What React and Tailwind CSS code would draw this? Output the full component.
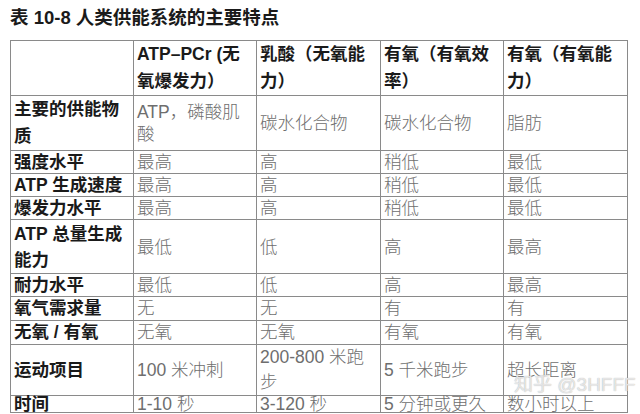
import React from "react";

const headers = [
  "",
  ["ATP–PCr (无", "氧爆发力）"],
  ["乳酸（无氧能", "力）"],
  ["有氧（有氧效", "率）"],
  ["有氧（有氧能", "力）"],
];

// lh: height/leading class for one text line in that row
const rows = [
  { h: "h-[55px]", lh: "h-[22px] leading-[22px]", labelLh: "h-[27px] leading-[27px]", label: ["主要的供能物", "质"], cells: [["ATP，磷酸肌", "酸"], "碳水化合物", "碳水化合物", "脂肪"] },
  { h: "h-[23px]", lh: "h-[22px] leading-[22px]", label: "强度水平", cells: ["最高", "高", "稍低", "最低"] },
  { h: "h-[23px]", lh: "h-[22px] leading-[22px]", label: "ATP 生成速度", cells: ["最高", "高", "稍低", "最低"] },
  { h: "h-[23px]", lh: "h-[22px] leading-[22px]", label: "爆发力水平", cells: ["最高", "高", "稍低", "最低"] },
  { h: "h-[54px]", lh: "h-[22px] leading-[22px]", labelLh: "h-[26px] leading-[26px]", label: ["ATP 总量生成", "能力"], cells: ["最低", "低", "高", "最高"] },
  { h: "h-[23px]", lh: "h-[22px] leading-[22px]", label: "耐力水平", cells: ["最低", "低", "高", "最高"] },
  { h: "h-[24px]", lh: "h-[23px] leading-[23px]", label: "氧气需求量", cells: ["无", "无", "有", "有"] },
  { h: "h-[24px]", lh: "h-[23px] leading-[23px]", label: "无氧 / 有氧", cells: ["无氧", "无氧", "有氧", "有氧"] },
  { h: "h-[51px]", lh: "h-[25px] leading-[25px]", label: "运动项目", cells: ["100 米冲刺", ["200-800 米跑", "步"], "5 千米跑步", "超长距离"] },
  { h: "h-[17px]", lh: "h-[16px] leading-[16px]", label: "时间", cells: ["1-10 秒", "3-120 秒", "5 分钟或更久", "数小时以上"] },
];

const Lines = ({ value, lh }) => {
  const list = Array.isArray(value) ? value : [value];
  return list.map((line, i) => (
    <div key={i} className={"whitespace-nowrap overflow-visible " + lh}>
      {line}
    </div>
  ));
};

export default function App() {
  return (
    <div
      className="relative w-[640px] h-[414px] overflow-hidden bg-white text-[#1a1a1a]"
      style={{ fontFamily: '"Liberation Sans", "Noto Sans CJK SC", sans-serif' }}
    >
      <div className="h-[40px] pl-[10px] pt-[6px] text-[18.5px] font-bold leading-[24px]">
        表 10-8 人类供能系统的主要特点
      </div>

      <table className="ml-[10px] w-[617px] table-fixed border-collapse">
        <colgroup>
          <col className="w-[123px]" />
          <col className="w-[123px]" />
          <col className="w-[124px]" />
          <col className="w-[123px]" />
          <col className="w-[124px]" />
        </colgroup>
        <thead>
          <tr className="h-[53px]">
            {headers.map((hd, i) => (
              <th
                key={i}
                className="border border-[#8a8a8a] px-[3px] py-0 text-left align-middle text-[17.5px] font-bold"
              >
                {hd && <Lines value={hd} lh="h-[27px] leading-[27px]" />}
              </th>
            ))}
          </tr>
        </thead>
        <tbody>
          {rows.map((r, ri) => (
            <tr key={ri} className={r.h}>
              <td className="border border-[#8a8a8a] px-[3px] py-0 align-middle text-[17.5px] font-bold">
                <Lines value={r.label} lh={r.labelLh || r.lh} />
              </td>
              {r.cells.map((c, ci) => (
                <td
                  key={ci}
                  className="border border-[#8a8a8a] px-[3px] py-0 align-middle text-[17.5px] font-light text-[#6e6e6e]"
                >
                  <Lines value={c} lh={r.lh} />
                </td>
              ))}
            </tr>
          ))}
        </tbody>
      </table>

      <div className="absolute left-[514px] top-[373px] text-[19px] leading-[24px] text-white/70 [text-shadow:0_0_1px_#a0a0a0]">
        知乎 @3HFFF
      </div>
    </div>
  );
}
